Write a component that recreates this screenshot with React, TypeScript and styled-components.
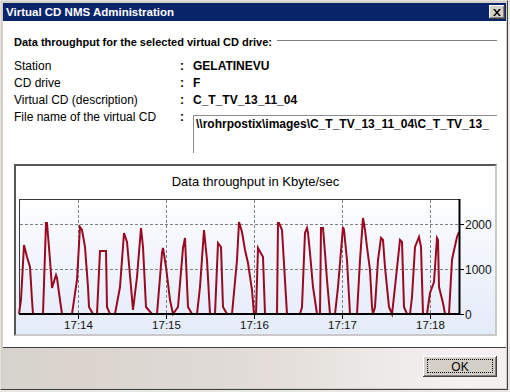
import React from "react";
import styled, { createGlobalStyle } from "styled-components";

const GlobalStyle = createGlobalStyle`
  html, body { margin: 0; padding: 0; background: #e9e7e4; }
  body { font-family: "Liberation Sans", Arial, sans-serif; color: #000; }
  * { box-sizing: border-box; }
`;

const Window = styled.div`
  width: 508px;
  height: 390px;
  display: flex;
  flex-direction: column;
  background: #d4d0c8;
  border: 1px solid;
  border-color: #e4e2de #404040 #404040 #e4e2de;
  padding: 2px 1px 1px 2px;
`;

const TitleBar = styled.div`
  height: 18px;
  flex: none;
  display: flex;
  align-items: center;
  justify-content: space-between;
  background: #0a246a;
  padding: 0 1px 0 3px;
`;

const TitleText = styled.span`
  color: #fff;
  font-weight: bold;
  font-size: 11.5px;
  line-height: 18px;
  white-space: nowrap;
`;

const CloseButton = styled.div`
  width: 16px;
  height: 14px;
  background: #d4d0c8;
  display: flex;
  align-items: center;
  justify-content: center;
  box-shadow: inset -1px -1px #404040, inset 1px 1px #ffffff,
    inset -2px -2px #808080, inset 2px 2px #d4d0c8;
`;

const Body = styled.div`
  flex: 1;
  display: flex;
  flex-direction: column;
  background: #fff;
`;

const Content = styled.div`
  flex: 1;
  display: flex;
  flex-direction: column;
  padding: 14px 9px 0 11px;
`;

const HeadingRow = styled.div`
  display: flex;
  align-items: flex-start;
  height: 14px;
`;

const Heading = styled.span`
  font-weight: bold;
  font-size: 11px;
  line-height: 14px;
  white-space: nowrap;
`;

const HeadingRule = styled.div`
  flex: 1;
  height: 1px;
  margin: 5px 0 0 5px;
  background: #808080;
`;

const InfoGrid = styled.div`
  display: grid;
  grid-template-columns: 166px 13px 1fr;
  grid-template-rows: 17px 17px 17px auto;
  margin-top: 9px;
  align-items: start;
`;

const Label = styled.span`
  font-size: 12px;
  line-height: 17px;
  white-space: nowrap;
`;

const Colon = styled.span`
  font-size: 12px;
  font-weight: bold;
  line-height: 17px;
`;

const Value = styled.span`
  font-size: 12px;
  font-weight: bold;
  line-height: 17px;
  white-space: nowrap;
`;

const PathBox = styled.div`
  margin-top: 6px;
  height: 38px;
  width: 100%;
  overflow: hidden;
  border-top: 1px solid #8c8c8c;
  border-left: 1px solid #8c8c8c;
  padding: 1px 0 0 2px;
  font-size: 12px;
  font-weight: bold;
  line-height: 14px;
  white-space: nowrap;
`;

const ChartFrame = styled.div`
  margin-top: 11px;
  height: 172px;
  display: flex;
  flex-direction: column;
  border: 2px solid;
  border-color: #575757 #c9c9c9 #c9c9c9 #575757;
  background: linear-gradient(
    180deg,
    #ffffff 0px,
    #ffffff 34px,
    #f3f6fc 80px,
    #e4ecf9 100%
  );
`;

const ChartTitle = styled.div`
  height: 30px;
  flex: none;
  display: flex;
  align-items: center;
  justify-content: center;
  font-size: 13px;
`;

const Footer = styled.div`
  height: 41px;
  flex: none;
  display: flex;
  justify-content: flex-end;
  align-items: flex-start;
  padding: 8px 9px 0 0;
  border-top: 1px solid #404040;
  background: linear-gradient(
    90deg,
    #d6d3ce 0%,
    #dcd5cd 18%,
    #ddd8d4 30%,
    #dedad6 42%,
    #e4ddda 52%,
    #e6e2de 62%,
    #ebe8e6 72%,
    #f1ecec 82%,
    #f6f2f1 92%,
    #f2efee 100%
  );
`;

const OkButton = styled.button`
  position: relative;
  width: 74px;
  height: 21px;
  padding: 0;
  border: none;
  background: #d4d0c8;
  font-family: "Liberation Sans", Arial, sans-serif;
  font-size: 12px;
  color: #000;
  box-shadow: inset -1px -1px #404040, inset 1px 1px #ffffff,
    inset -2px -2px #808080, inset 2px 2px #d4d0c8;
  &::after {
    content: "";
    position: absolute;
    left: 4px;
    right: 4px;
    top: 3px;
    bottom: 4px;
    border: 1px dotted #000;
  }
`;

const points: [number, number][] = [
  [19, 314], [21, 300], [24, 245], [27, 257], [30, 267], [32, 300], [33, 314],
  [43, 314], [46, 223], [47, 223], [50, 260], [52, 288], [56, 275], [57, 278],
  [60, 300], [62, 314], [72, 314], [77, 280], [80, 227], [82, 230], [85, 247],
  [88, 287], [89, 307], [93, 314], [97, 314], [100, 251], [106, 251], [107, 307],
  [110, 314], [115, 314], [120, 287], [124, 233], [127, 242], [131, 287],
  [133, 310], [137, 277], [141, 228], [143, 247], [146, 307], [152, 314],
  [157, 314], [162, 253], [163, 248], [166, 267], [170, 300], [173, 314],
  [178, 307], [183, 248], [185, 238], [188, 307], [192, 314], [197, 314],
  [200, 287], [204, 230], [207, 260], [210, 314], [215, 314], [218, 243],
  [221, 247], [223, 307], [227, 314], [232, 314], [237, 260], [239, 222],
  [242, 232], [245, 250], [248, 263], [252, 290], [254, 314], [256, 314],
  [258, 248], [263, 257], [265, 314], [277, 314], [278, 223], [279, 223],
  [282, 230], [283, 247], [287, 314], [300, 314], [302, 307], [305, 233],
  [307, 228], [308, 233], [310, 253], [313, 287], [317, 314], [320, 314],
  [321, 228], [323, 228], [325, 253], [327, 280], [330, 314], [335, 314],
  [338, 287], [343, 227], [344, 230], [347, 260], [350, 314], [357, 314],
  [360, 260], [363, 218], [365, 230], [367, 247], [370, 270], [372, 307],
  [373, 314], [375, 307], [378, 260], [381, 238], [383, 240], [385, 267],
  [389, 307], [392, 314], [395, 287], [400, 240], [402, 242], [404, 307],
  [407, 314], [410, 314], [412, 297], [415, 247], [419, 237], [421, 247],
  [423, 314], [427, 314], [430, 293], [434, 282], [437, 238], [438, 240],
  [439, 287], [443, 303], [445, 314], [449, 314], [452, 260], [453, 255],
  [457, 237], [459, 232],
];

const minutes = [
  { x: 78.5, label: "17:14" },
  { x: 166.5, label: "17:15" },
  { x: 254.5, label: "17:16" },
  { x: 342.5, label: "17:17" },
  { x: 430.5, label: "17:18" },
];

const yTicks = [
  { y: 224.5, label: "2000" },
  { y: 269.5, label: "1000" },
  { y: 314, label: "0" },
];

function ThroughputChart() {
  return (
    <svg width="478" height="138" viewBox="16 196 478 138" style={{ display: "block" }}>
      <line x1="19" y1="199.5" x2="459" y2="199.5" stroke="#3a3a3a" strokeWidth="1" />
      <line x1="19.5" y1="199" x2="19.5" y2="314" stroke="#3a3a3a" strokeWidth="1" />
      {yTicks.slice(0, 2).map((t) => (
        <line key={t.label} x1="20" y1={t.y} x2="459" y2={t.y} stroke="#808080" strokeWidth="1" strokeDasharray="3 2" />
      ))}
      {minutes.map((m) => (
        <line key={m.label} x1={m.x} y1="200" x2={m.x} y2="313" stroke="#808080" strokeWidth="1" strokeDasharray="3 2" />
      ))}
      <polyline
        points={points.map((p) => p.join(",")).join(" ")}
        fill="none"
        stroke="#990a22"
        strokeWidth="2"
        strokeLinejoin="miter"
      />
      <line x1="19" y1="314" x2="460" y2="314" stroke="#000" strokeWidth="2" />
      <line x1="459.5" y1="199" x2="459.5" y2="315" stroke="#000" strokeWidth="2" />
      {yTicks.map((t) => (
        <g key={t.label}>
          <line x1="460" y1={Math.floor(t.y) + 0.5} x2="464" y2={Math.floor(t.y) + 0.5} stroke="#000" strokeWidth="1" />
          <text x="465" y={t.y + 4.5} fontSize="12" fontFamily="Liberation Sans, Arial, sans-serif" fill="#111">
            {t.label}
          </text>
        </g>
      ))}
      {minutes.map((m) => (
        <g key={m.label}>
          <line x1={m.x} y1="315" x2={m.x} y2="319" stroke="#000" strokeWidth="1" />
          <text x={m.x} y="329" fontSize="11.5" textAnchor="middle" fontFamily="Liberation Sans, Arial, sans-serif" fill="#111">
            {m.label}
          </text>
        </g>
      ))}
    </svg>
  );
}

export default function App() {
  return (
    <>
      <GlobalStyle />
      <Window>
        <TitleBar>
          <TitleText>Virtual CD NMS Administration</TitleText>
          <CloseButton>
            <svg width="8" height="7" viewBox="0 0 8 7">
              <path d="M0 0h2l2 2.5L6 0h2L5 3.5 8 7H6L4 4.5 2 7H0l3-3.5z" fill="#000" />
            </svg>
          </CloseButton>
        </TitleBar>
        <Body>
          <Content>
            <HeadingRow>
              <Heading>Data throughput for the selected virtual CD drive:</Heading>
              <HeadingRule />
            </HeadingRow>
            <InfoGrid>
              <Label>Station</Label>
              <Colon>:</Colon>
              <Value>GELATINEVU</Value>
              <Label>CD drive</Label>
              <Colon>:</Colon>
              <Value>F</Value>
              <Label>Virtual CD (description)</Label>
              <Colon>:</Colon>
              <Value>C_T_TV_13_11_04</Value>
              <Label>File name of the virtual CD</Label>
              <Colon>:</Colon>
              <PathBox>\\rohrpostix\images\C_T_TV_13_11_04\C_T_TV_13_</PathBox>
            </InfoGrid>
            <ChartFrame>
              <ChartTitle>Data throughput in Kbyte/sec</ChartTitle>
              <ThroughputChart />
            </ChartFrame>
          </Content>
          <Footer>
            <OkButton>OK</OkButton>
          </Footer>
        </Body>
      </Window>
    </>
  );
}
